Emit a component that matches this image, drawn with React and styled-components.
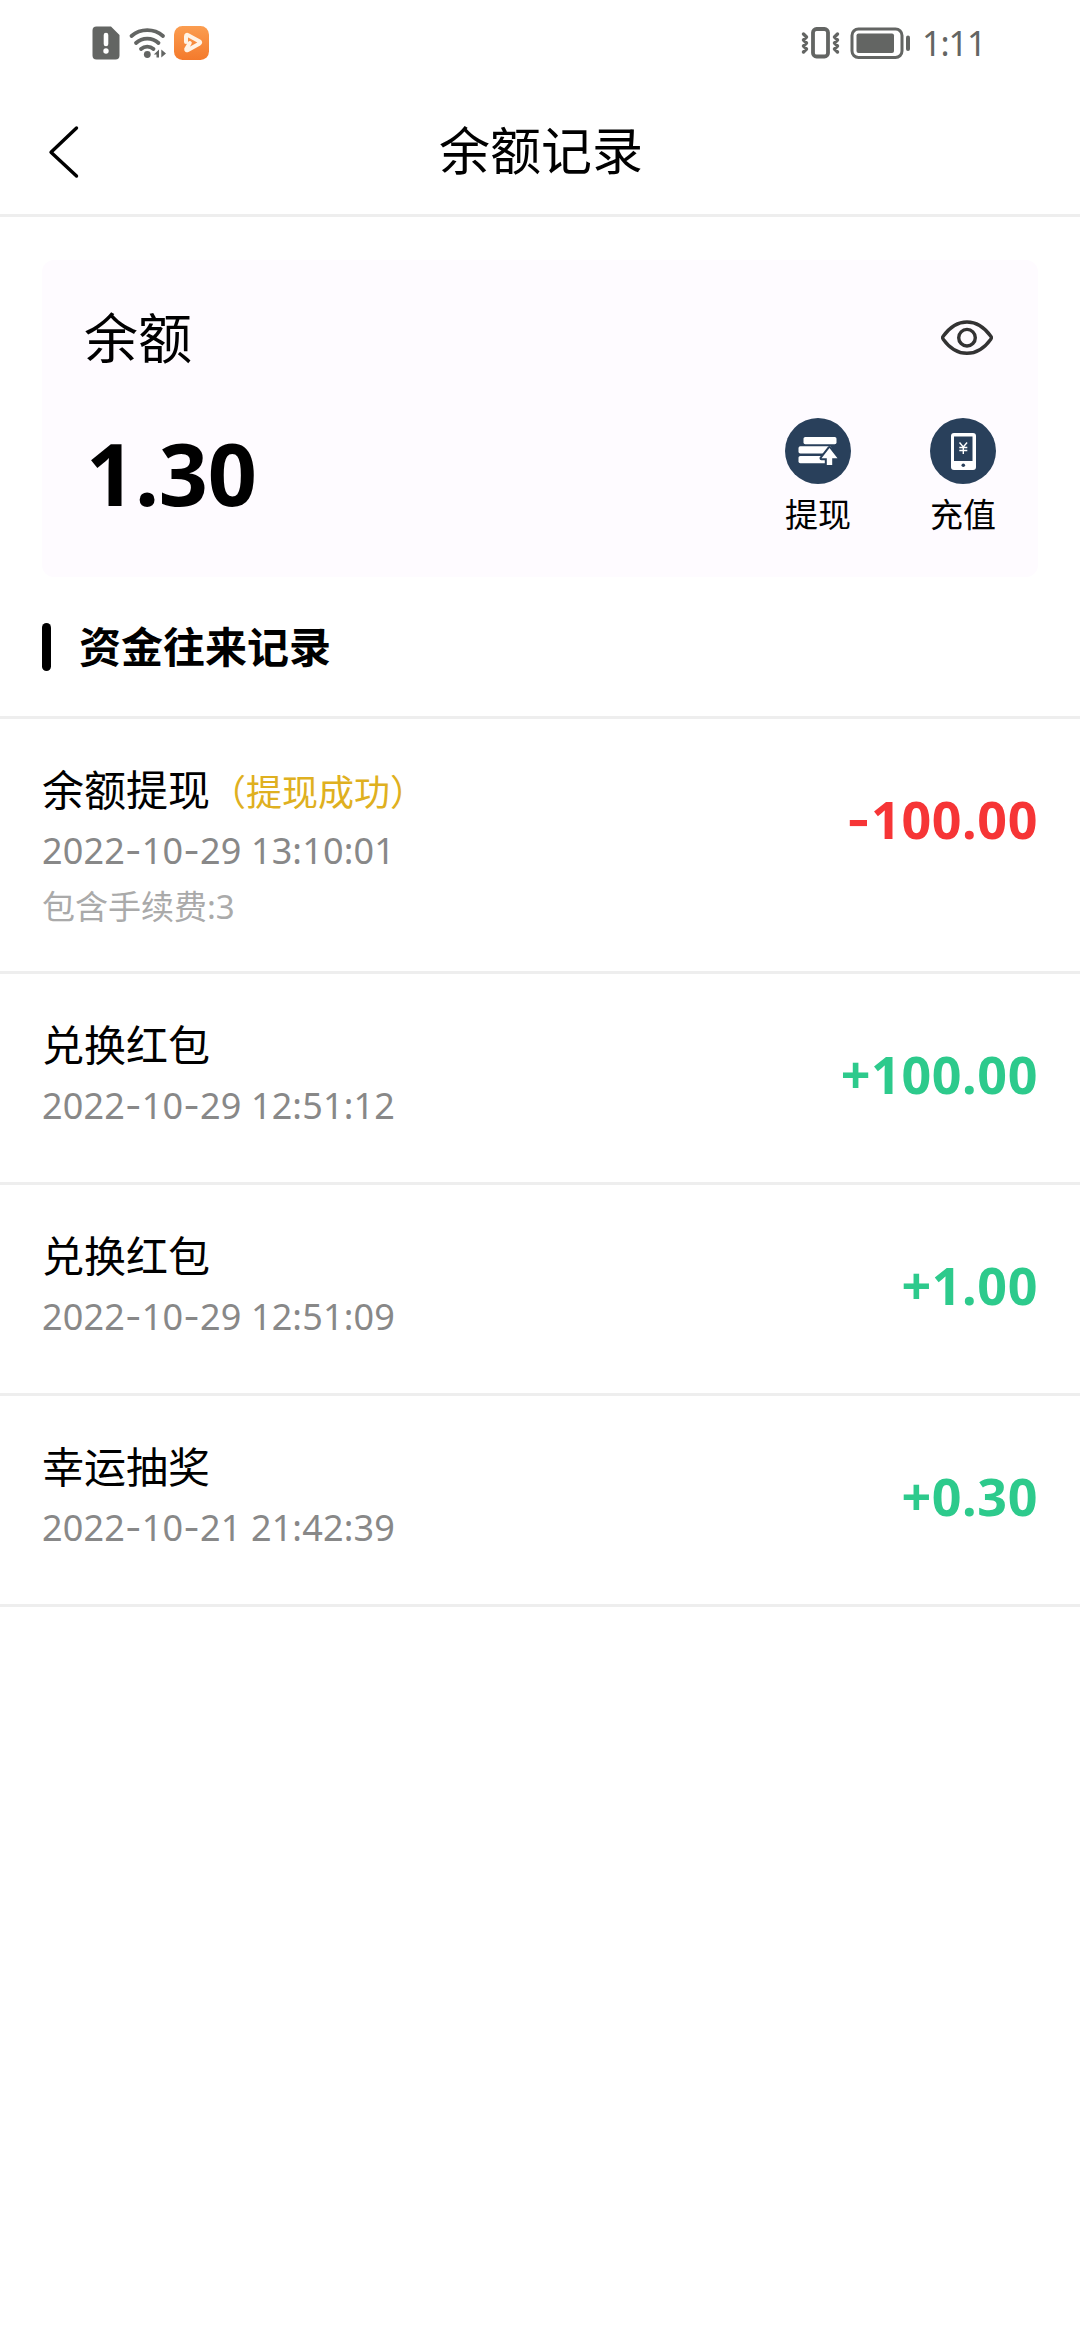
import React from "react";
import styled, { createGlobalStyle } from "styled-components";

const GlobalStyle = createGlobalStyle`
  * {
    box-sizing: border-box;
  }

  body {
    margin: 0;
    background: #fff;
    color: #000;
    font-family: "Noto Sans", "Noto Sans CJK SC", sans-serif;
  }
`;

const Page = styled.div`
  width: 1080px;
  min-height: 2340px;
  background: #fff;
`;

const StatusBar = styled.div`
  display: flex;
  justify-content: space-between;
  align-items: center;
  height: 86px;
  padding: 0 93px 0 92px;
  color: #636563;
`;

const StatusGroup = styled.div`
  display: flex;
  align-items: center;
  gap: ${props => props.$gap}px;
`;

const Clock = styled.span`
  width: 65px;
  font-size: 34px;
  line-height: 40px;
  letter-spacing: -1px;
  white-space: nowrap;
`;

const Header = styled.header`
  display: grid;
  grid-template-columns: 120px 1fr 120px;
  align-items: center;
  height: 131px;
  border-bottom: 3px solid #eee;
`;

const BackButton = styled.button`
  display: flex;
  padding: 3px 0 0 46px;
  border: 0;
  background: none;
`;

const Title = styled.h1`
  margin: 0;
  padding-left: 2px;
  font-size: 51px;
  font-weight: 400;
  line-height: 70px;
  text-align: center;
`;

const Card = styled.section`
  display: flex;
  justify-content: space-between;
  height: 317px;
  margin: 43px 42px 0;
  padding: 43px 42px 0;
  border-radius: 12px;
  background: #fefbff;
`;

const CardColumn = styled.div`
  display: flex;
  flex-direction: column;
  align-items: ${props => props.$align};
`;

const CardLabel = styled.div`
  font-size: 54px;
  line-height: 70px;
`;

const Balance = styled.div`
  margin-top: 45px;
  padding-left: 2px;
  font-size: 86px;
  font-weight: 700;
  line-height: 110px;
  letter-spacing: -0.3px;
`;

const EyeButton = styled.button`
  display: flex;
  margin: 17px 3px 0 0;
  padding: 0;
  border: 0;
  background: none;
`;

const Actions = styled.div`
  display: flex;
  gap: 79px;
  margin-top: 62px;
`;

const Action = styled.div`
  display: flex;
  flex-direction: column;
  align-items: center;
  font-size: 33px;
  line-height: 44px;

  svg {
    margin-bottom: 9px;
  }
`;

const SectionTitle = styled.h2`
  display: flex;
  align-items: center;
  height: 142px;
  margin: 0;
  padding-left: 42px;
  border-bottom: 3px solid #eee;
  font-size: 42px;
  font-weight: 700;
  line-height: 60px;

  &::before {
    content: "";
    width: 9px;
    height: 48px;
    margin-right: 28px;
    border-radius: 5px;
    background: #000;
  }
`;

const List = styled.ul`
  list-style: none;
  margin: 0;
  padding: 0;
`;

const Row = styled.li`
  display: flex;
  justify-content: space-between;
  height: ${props => (props.$tall ? 255 : 211)}px;
  padding: 40px 42px 0;
  border-bottom: 3px solid #eee;
`;

const RowTitle = styled.div`
  font-size: 42px;
  line-height: 62px;
`;

const RowStatus = styled.span`
  color: #dfb020;
  font-size: 36px;
  line-height: 1;
`;

const RowDate = styled.div`
  color: #888;
  font-size: 36px;
  line-height: 60px;
  letter-spacing: 0.15px;
`;

const RowNote = styled.div`
  color: #aaa;
  font-size: 33px;
  line-height: 52px;
`;

const Amount = styled.div`
  margin-top: 25px;
  color: ${props => (props.$negative ? "#f63536" : "#2dca8c")};
  font-size: 52px;
  font-weight: 700;
  line-height: 70px;
  letter-spacing: 0.6px;
`;

// Noto's hyphen is too short between digits, Inter has a wider one
const Dash = styled.span`
  font-family: Inter, sans-serif;
  line-height: 1;
`;

function withDashes(text) {
  return text
    .split(/(-)/)
    .map((part, i) => (part === "-" ? <Dash key={i}>-</Dash> : part));
}

const SimAlertIcon = () => (
  <svg width="28" height="34" viewBox="0 0 28 34">
    <path
      d="M4 0.5H19L27.5 9V29.5a4 4 0 0 1-4 4H4.5a4 4 0 0 1-4-4V4.5a4 4 0 0 1 4-4Z"
      fill="#636563"
    />
    <path d="M14 9v9" stroke="#fff" strokeWidth="4.6" strokeLinecap="round" />
    <circle cx="14" cy="25" r="2.7" fill="#fff" />
  </svg>
);

const WifiIcon = () => (
  <svg width="38" height="32" viewBox="0 0 38 32" fill="none">
    <g stroke="#636563" strokeWidth="3.8" strokeLinecap="round">
      <path d="M3.5 9a24 24 0 0 1 31.500 0" />
      <path d="M8 16a16.500 16.500 0 0 1 22.500 0" />
      <path d="M13 22a9.500 9.500 0 0 1 12.500 0" />
    </g>
    <circle cx="19.300" cy="27.500" r="3.400" fill="#636563" />
    <path d="M31 22.500v8h-2.500v-3H25.800ZM33.300 22.500v8L38 26.500Z" fill="#636563" />
  </svg>
);

const PlayerIcon = () => (
  <svg width="35" height="34" viewBox="0 0 35 34">
    <defs>
      <linearGradient id="player" x1="0" y1="0" x2="0" y2="1">
        <stop offset="0" stopColor="#fb9d50" />
        <stop offset="1" stopColor="#f47a2c" />
      </linearGradient>
    </defs>
    <rect width="35" height="34" rx="8.5" fill="url(#player)" />
    <path
      d="M12 16V10.500q0-2.500 2.200-1.300l11 6q2 1.300 0 2.500L14 24q-2 1-1.800-1l3.600-6"
      fill="none"
      stroke="#fff3e6"
      strokeWidth="4"
      strokeLinecap="round"
      strokeLinejoin="round"
    />
  </svg>
);

const VibrateIcon = () => (
  <svg
    width="39"
    height="32"
    viewBox="0 0 39 32"
    fill="none"
    stroke="#636563"
    strokeLinecap="round"
    strokeLinejoin="round"
  >
    <rect x="12" y="2" width="15" height="27.5" rx="3.5" strokeWidth="3.8" />
    <path
      d="M2.500 7l3 3-3 3 3 3-3 3 3 3-3 3M36.500 7l-3 3 3 3-3 3 3 3-3 3 3 3"
      strokeWidth="3.4"
    />
  </svg>
);

const BatteryIcon = () => (
  <svg width="62" height="33" viewBox="0 0 62 33">
    <rect
      x="2"
      y="2"
      width="50"
      height="28.5"
      rx="6.5"
      fill="none"
      stroke="#636563"
      strokeWidth="3"
    />
    <rect x="6.5" y="6.5" width="37.5" height="19.5" rx="2" fill="#636563" />
    <path
      d="M58 10.500v11.500"
      stroke="#636563"
      strokeWidth="4"
      strokeLinecap="round"
    />
  </svg>
);

const BackIcon = () => (
  <svg width="36" height="54" viewBox="0 0 36 54">
    <path
      d="M30.500 3L5 27.200 30.500 51"
      fill="none"
      stroke="#000"
      strokeWidth="3.4"
      strokeLinecap="round"
      strokeLinejoin="round"
    />
  </svg>
);

const EyeIcon = () => (
  <svg
    width="52"
    height="36"
    viewBox="0 0 52 36"
    fill="none"
    stroke="#333"
    strokeWidth="3.4"
    strokeLinejoin="round"
  >
    <path d="M2.200 16.200C8.500 7.500 17 2 26 2s17.500 5.500 23.800 14.200a2.500 2.500 0 0 1 0 3C43.500 28 35 33.300 26 33.300S8.500 28 2.200 19.200a2.500 2.500 0 0 1 0-3Z" />
    <circle cx="26" cy="17.700" r="8.300" />
  </svg>
);

const WithdrawIcon = () => (
  <svg width="66" height="66" viewBox="0 0 66 66" fill="#fff">
    <circle cx="33" cy="33" r="33" fill="#29405b" />
    <rect x="18.500" y="19" width="33" height="7.200" rx="1.800" />
    <rect x="13.500" y="28.300" width="33" height="7.200" rx="1.800" />
    <rect x="13.500" y="38" width="28" height="7.200" rx="1.800" />
    <path
      d="M44.500 30l8 10.200h-5.300V47h-5.400v-6.800H36.500Z"
      stroke="#29405b"
      strokeWidth="4"
      paintOrder="stroke"
      strokeLinejoin="round"
    />
  </svg>
);

const RechargeIcon = () => (
  <svg width="66" height="66" viewBox="0 0 66 66">
    <circle cx="33" cy="33" r="33" fill="#29405b" />
    <rect x="21" y="15" width="25" height="37" rx="3" fill="#fff" />
    <rect x="24" y="18.500" width="18.500" height="24.500" fill="#29405b" />
    <circle cx="33.300" cy="47.200" r="1.800" fill="#29405b" />
    <path
      d="M29.500 24.500l3.800 4.500 3.800-4.500M33.300 29v7M29.300 29.500h8M29.300 32.500h8"
      fill="none"
      stroke="#fff"
      strokeWidth="1.4"
    />
  </svg>
);

const records = [
  {
    title: "余额提现",
    status: "（提现成功）",
    date: "2022-10-29 13:10:01",
    note: "包含手续费:3",
    amount: "-100.00"
  },
  { title: "兑换红包", date: "2022-10-29 12:51:12", amount: "+100.00" },
  { title: "兑换红包", date: "2022-10-29 12:51:09", amount: "+1.00" },
  { title: "幸运抽奖", date: "2022-10-21 21:42:39", amount: "+0.30" }
];

function Record({ title, status, date, note, amount }) {
  return (
    <Row $tall={Boolean(note)}>
      <div>
        <RowTitle>
          {title}
          {status && <RowStatus>{status}</RowStatus>}
        </RowTitle>
        <RowDate>{withDashes(date)}</RowDate>
        {note && <RowNote>{note}</RowNote>}
      </div>
      <Amount $negative={amount.startsWith("-")}>{withDashes(amount)}</Amount>
    </Row>
  );
}

export default function App() {
  return (
    <Page>
      <GlobalStyle />
      <StatusBar>
        <StatusGroup $gap={8}>
          <SimAlertIcon />
          <WifiIcon />
          <PlayerIcon />
        </StatusGroup>
        <StatusGroup $gap={10}>
          <VibrateIcon />
          <BatteryIcon />
          <Clock>1:11</Clock>
        </StatusGroup>
      </StatusBar>

      <Header>
        <BackButton aria-label="返回">
          <BackIcon />
        </BackButton>
        <Title>余额记录</Title>
      </Header>

      <Card>
        <CardColumn $align="flex-start">
          <CardLabel>余额</CardLabel>
          <Balance>1.30</Balance>
        </CardColumn>
        <CardColumn $align="flex-end">
          <EyeButton aria-label="隐藏余额">
            <EyeIcon />
          </EyeButton>
          <Actions>
            <Action>
              <WithdrawIcon />
              提现
            </Action>
            <Action>
              <RechargeIcon />
              充值
            </Action>
          </Actions>
        </CardColumn>
      </Card>

      <SectionTitle>资金往来记录</SectionTitle>
      <List>
        {records.map(record => (
          <Record key={record.date} {...record} />
        ))}
      </List>
    </Page>
  );
}
